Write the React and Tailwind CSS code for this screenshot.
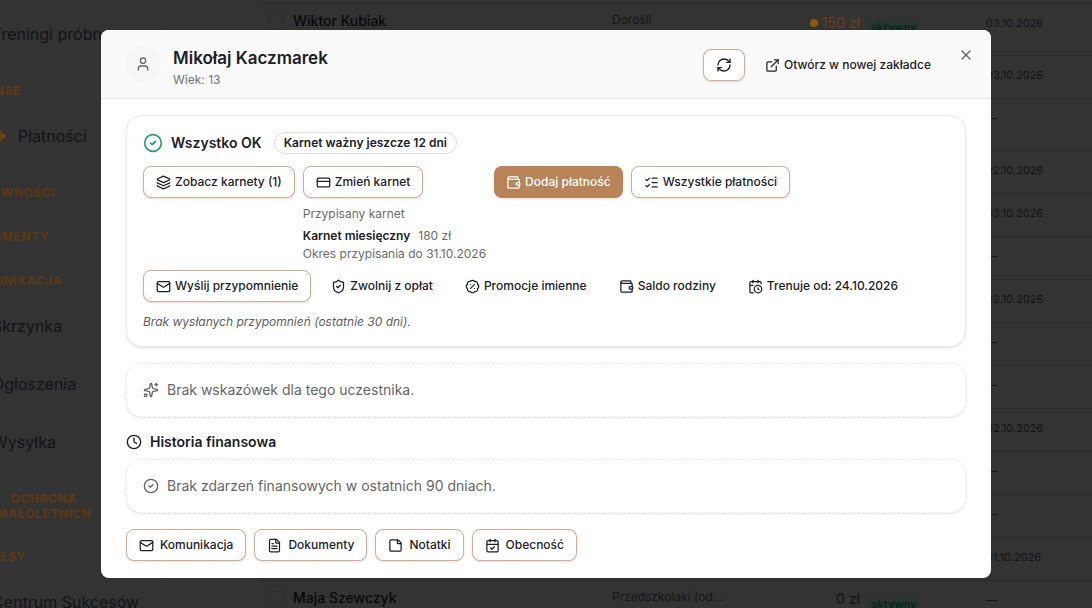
import React from "react";
import {
  ArrowRight,
  BadgePercent,
  CalendarCheck,
  CalendarClock,
  CircleCheck,
  Clock,
  CreditCard,
  ExternalLink,
  FileText,
  Layers,
  ListChecks,
  Mail,
  RefreshCw,
  ShieldCheck,
  Sparkles,
  StickyNote,
  User,
  Wallet,
  X,
} from "lucide-react";

const NAV = [
  { type: "link", label: "Treningi próbne" },
  { type: "heading", label: "Finanse" },
  { type: "active", label: "Płatności" },
  { type: "heading", label: "Aktywności" },
  { type: "heading", label: "Dokumenty" },
  { type: "heading", label: "Komunikacja" },
  { type: "link", label: "Skrzynka" },
  { type: "link", label: "Ogłoszenia" },
  { type: "link", label: "Wysyłka" },
  { type: "group", label: "Ochrona małoletnich" },
  { type: "heading", label: "Procesy" },
  { type: "link", label: "Centrum Sukcesów" },
];

const ROWS = [
  { name: "Wiktor Kubiak", group: "Dorośli", amount: "150 zł", due: true, date: "03.10.2026", tall: true },
  { date: "03.10.2026" },
  { date: "—", tall: true },
  { date: "02.10.2026" },
  { date: "03.10.2026" },
  { date: "—" },
  { date: "02.10.2026" },
  { date: "—" },
  { date: "—" },
  { date: "02.10.2026" },
  { date: "—" },
  { date: "—" },
  { date: "01.10.2026" },
  { name: "Maja Szewczyk", group: "Przedszkolaki (od...", amount: "0 zł", date: "—", tall: true },
];

function NavItem({ type, label }) {
  if (type === "heading" || type === "group") {
    return (
      <h3
        className={`pt-5 pb-2 text-xs font-bold tracking-wider text-[#5e3812] uppercase ${
          type === "group" ? "ml-8 w-24 text-center leading-[15px]" : "leading-4"
        }`}
      >
        {label}
      </h3>
    );
  }
  return (
    <a
      href="#"
      className="flex h-[58px] items-center gap-[10px] pl-7 text-base whitespace-nowrap text-[#121418]"
    >
      {type === "active" && <ArrowRight className="size-4 text-[#7a4509]" strokeWidth={3} />}
      {label}
    </a>
  );
}

function Backdrop() {
  return (
    <div className="flex h-full" aria-hidden="true">
      <nav className="w-[167px] shrink-0 overflow-hidden border-r border-[#303030] pt-[5px]">
        <div className="-ml-9">
          {NAV.map((item) => (
            <NavItem key={item.label} {...item} />
          ))}
        </div>
      </nav>
      <main className="min-w-0 flex-1 pt-[3px] pl-[93px]">
        <table className="w-full table-fixed border-t border-[#2a2a2a] text-xs text-[#121316]">
          <colgroup>
            <col className="w-[33px]" />
            <col className="w-[319px]" />
            <col className="w-[176px]" />
            <col className="w-[84px]" />
            <col className="w-[114px]" />
            <col />
          </colgroup>
          <tbody>
            {ROWS.map((row, i) => (
              <tr
                key={i}
                className={`border-b border-[#2a2a2a] align-top ${row.tall ? "h-[52px]" : "h-[43px]"}`}
              >
                <td className="pt-[10px] pl-2">
                  {row.name && (
                    <input
                      type="checkbox"
                      aria-label={row.name}
                      className="block size-4 appearance-none rounded border border-[#2d2d2d]"
                    />
                  )}
                </td>
                <td className="pt-[7px] text-sm font-medium text-[#08090d]">{row.name}</td>
                <td className="pt-2 text-[#151618]">{row.group}</td>
                <td className="pt-2 pr-3 text-right text-sm leading-5">
                  {row.amount && (
                    <span
                      className={`inline-flex items-center gap-1 ${
                        row.due ? "text-[#6b4218]" : "text-[#121316]"
                      }`}
                    >
                      {row.due && <span className="size-2 rounded-full bg-[#8f5807]" />}
                      {row.amount}
                    </span>
                  )}
                </td>
                <td className="pt-[15px]">
                  {row.amount && (
                    <span className="-ml-1 block w-[52px] rounded-full bg-[#2a3532] text-center text-[11px] leading-4 font-semibold text-[#06241b]">
                      aktywny
                    </span>
                  )}
                </td>
                <td className="pt-[10px] text-[11px] leading-[18px]">{row.date}</td>
              </tr>
            ))}
          </tbody>
        </table>
      </main>
    </div>
  );
}

const VARIANTS = {
  outline: "border border-[#cfae98] bg-white text-[#1c2128] shadow-sm",
  solid: "bg-[#b98358] text-white shadow-sm",
  ghost: "text-[#1c2128]",
};

function Button({ icon: Icon, children, variant = "outline", wide = false }) {
  return (
    <button
      type="button"
      className={`flex h-8 items-center rounded-lg px-3 text-xs font-medium whitespace-nowrap ${
        wide ? "gap-[6px]" : "gap-1"
      } ${VARIANTS[variant]}`}
    >
      <Icon className="size-[15px]" />
      {children}
    </button>
  );
}

function EmptyCard({ icon: Icon, children }) {
  return (
    <div className="flex h-[54px] items-center gap-2 rounded-2xl border border-dashed border-[#ececec] px-4 text-sm text-[#666666] shadow-sm">
      <Icon className="size-4" />
      <p>{children}</p>
    </div>
  );
}

function ParticipantDialog() {
  return (
    <section
      role="dialog"
      aria-labelledby="participant-name"
      className="relative w-full max-w-[890px] overflow-hidden rounded-lg bg-white"
    >
      <header className="flex items-start gap-3 border-b border-[#e5e5e5] bg-[#fafafa] pt-4 pr-12 pb-2 pl-6">
        <span className="flex size-9 items-center justify-center rounded-full bg-[#f6f6f6] text-[#6b6b6b]">
          <User className="size-4" />
        </span>
        <div className="flex-1">
          <h2 id="participant-name" className="text-[17px] leading-6 font-semibold text-[#1c2128]">
            Mikołaj Kaczmarek
          </h2>
          <p className="text-xs leading-5 text-[#737373]">Wiek: 13</p>
        </div>
        <div className="mt-[3px] flex items-center gap-2">
          <button
            type="button"
            aria-label="Odśwież"
            className="flex h-8 items-center rounded-lg border border-[#cfae98] bg-white px-3 text-[#1c2128] shadow-sm"
          >
            <RefreshCw className="size-4" />
          </button>
          <a
            href="#"
            className="flex h-8 items-center gap-1 px-3 text-xs font-medium text-[#1c2128]"
          >
            <ExternalLink className="size-[15px]" />
            Otwórz w nowej zakładce
          </a>
        </div>
        <button type="button" aria-label="Zamknij" className="absolute top-[17px] right-[17px] text-[#666666]">
          <X className="size-4" />
        </button>
      </header>

      <div className="flex flex-col gap-4 px-[25px] pt-4 pb-[17px]">
        <div className="flex flex-col rounded-2xl border border-[#e9e9e9] p-4 shadow-sm">
          <div className="flex items-center gap-2">
            <CircleCheck className="size-5 text-[#23a06e]" />
            <h3 className="text-sm leading-5 font-semibold text-[#1c2128]">Wszystko OK</h3>
            <span className="ml-1 rounded-full border border-[#e0e0e0] px-[9px] text-xs leading-5 font-semibold text-[#1c2128]">
              Karnet ważny jeszcze 12 dni
            </span>
          </div>

          <div className="mt-3 flex flex-wrap items-start gap-2">
            <Button icon={Layers}>Zobacz karnety (1)</Button>
            <div className="flex flex-col items-start text-xs text-[#6b6b6b]">
              <Button icon={CreditCard}>Zmień karnet</Button>
              <p className="mt-2 leading-4">Przypisany karnet</p>
              <p className="mt-1 flex gap-2 leading-5">
                <span className="font-semibold text-[#1c2128]">Karnet miesięczny</span>
                180 zł
              </p>
              <p className="leading-4">Okres przypisania do 31.10.2026</p>
            </div>
            <Button icon={Wallet} variant="solid">
              Dodaj płatność
            </Button>
            <Button icon={ListChecks}>Wszystkie płatności</Button>
          </div>

          <div className="mt-2 flex flex-wrap gap-2">
            <Button icon={Mail}>Wyślij przypomnienie</Button>
            <Button icon={ShieldCheck} variant="ghost">
              Zwolnij z opłat
            </Button>
            <Button icon={BadgePercent} variant="ghost">
              Promocje imienne
            </Button>
            <Button icon={Wallet} variant="ghost">
              Saldo rodziny
            </Button>
            <Button icon={CalendarClock} variant="ghost">
              Trenuje od: 24.10.2026
            </Button>
          </div>
          <p className="mt-3 text-xs leading-4 text-[#5f5f5f] italic">
            Brak wysłanych przypomnień (ostatnie 30 dni).
          </p>
        </div>

        <EmptyCard icon={Sparkles}>Brak wskazówek dla tego uczestnika.</EmptyCard>

        <div className="flex flex-col gap-2">
          <h3 className="flex items-center gap-2 text-sm leading-[18px] font-semibold text-[#1c2128]">
            <Clock className="size-4" />
            Historia finansowa
          </h3>
          <EmptyCard icon={CircleCheck}>Brak zdarzeń finansowych w ostatnich 90 dniach.</EmptyCard>
        </div>

        <div className="flex flex-wrap gap-2">
          <Button icon={Mail} wide>
            Komunikacja
          </Button>
          <Button icon={FileText} wide>
            Dokumenty
          </Button>
          <Button icon={StickyNote} wide>
            Notatki
          </Button>
          <Button icon={CalendarCheck} wide>
            Obecność
          </Button>
        </div>
      </div>
    </section>
  );
}

export default function App() {
  return (
    <div className="relative h-screen overflow-hidden bg-[#333333] font-['Inter',sans-serif]">
      <Backdrop />
      <div className="absolute inset-0 flex items-center justify-center">
        <ParticipantDialog />
      </div>
    </div>
  );
}
